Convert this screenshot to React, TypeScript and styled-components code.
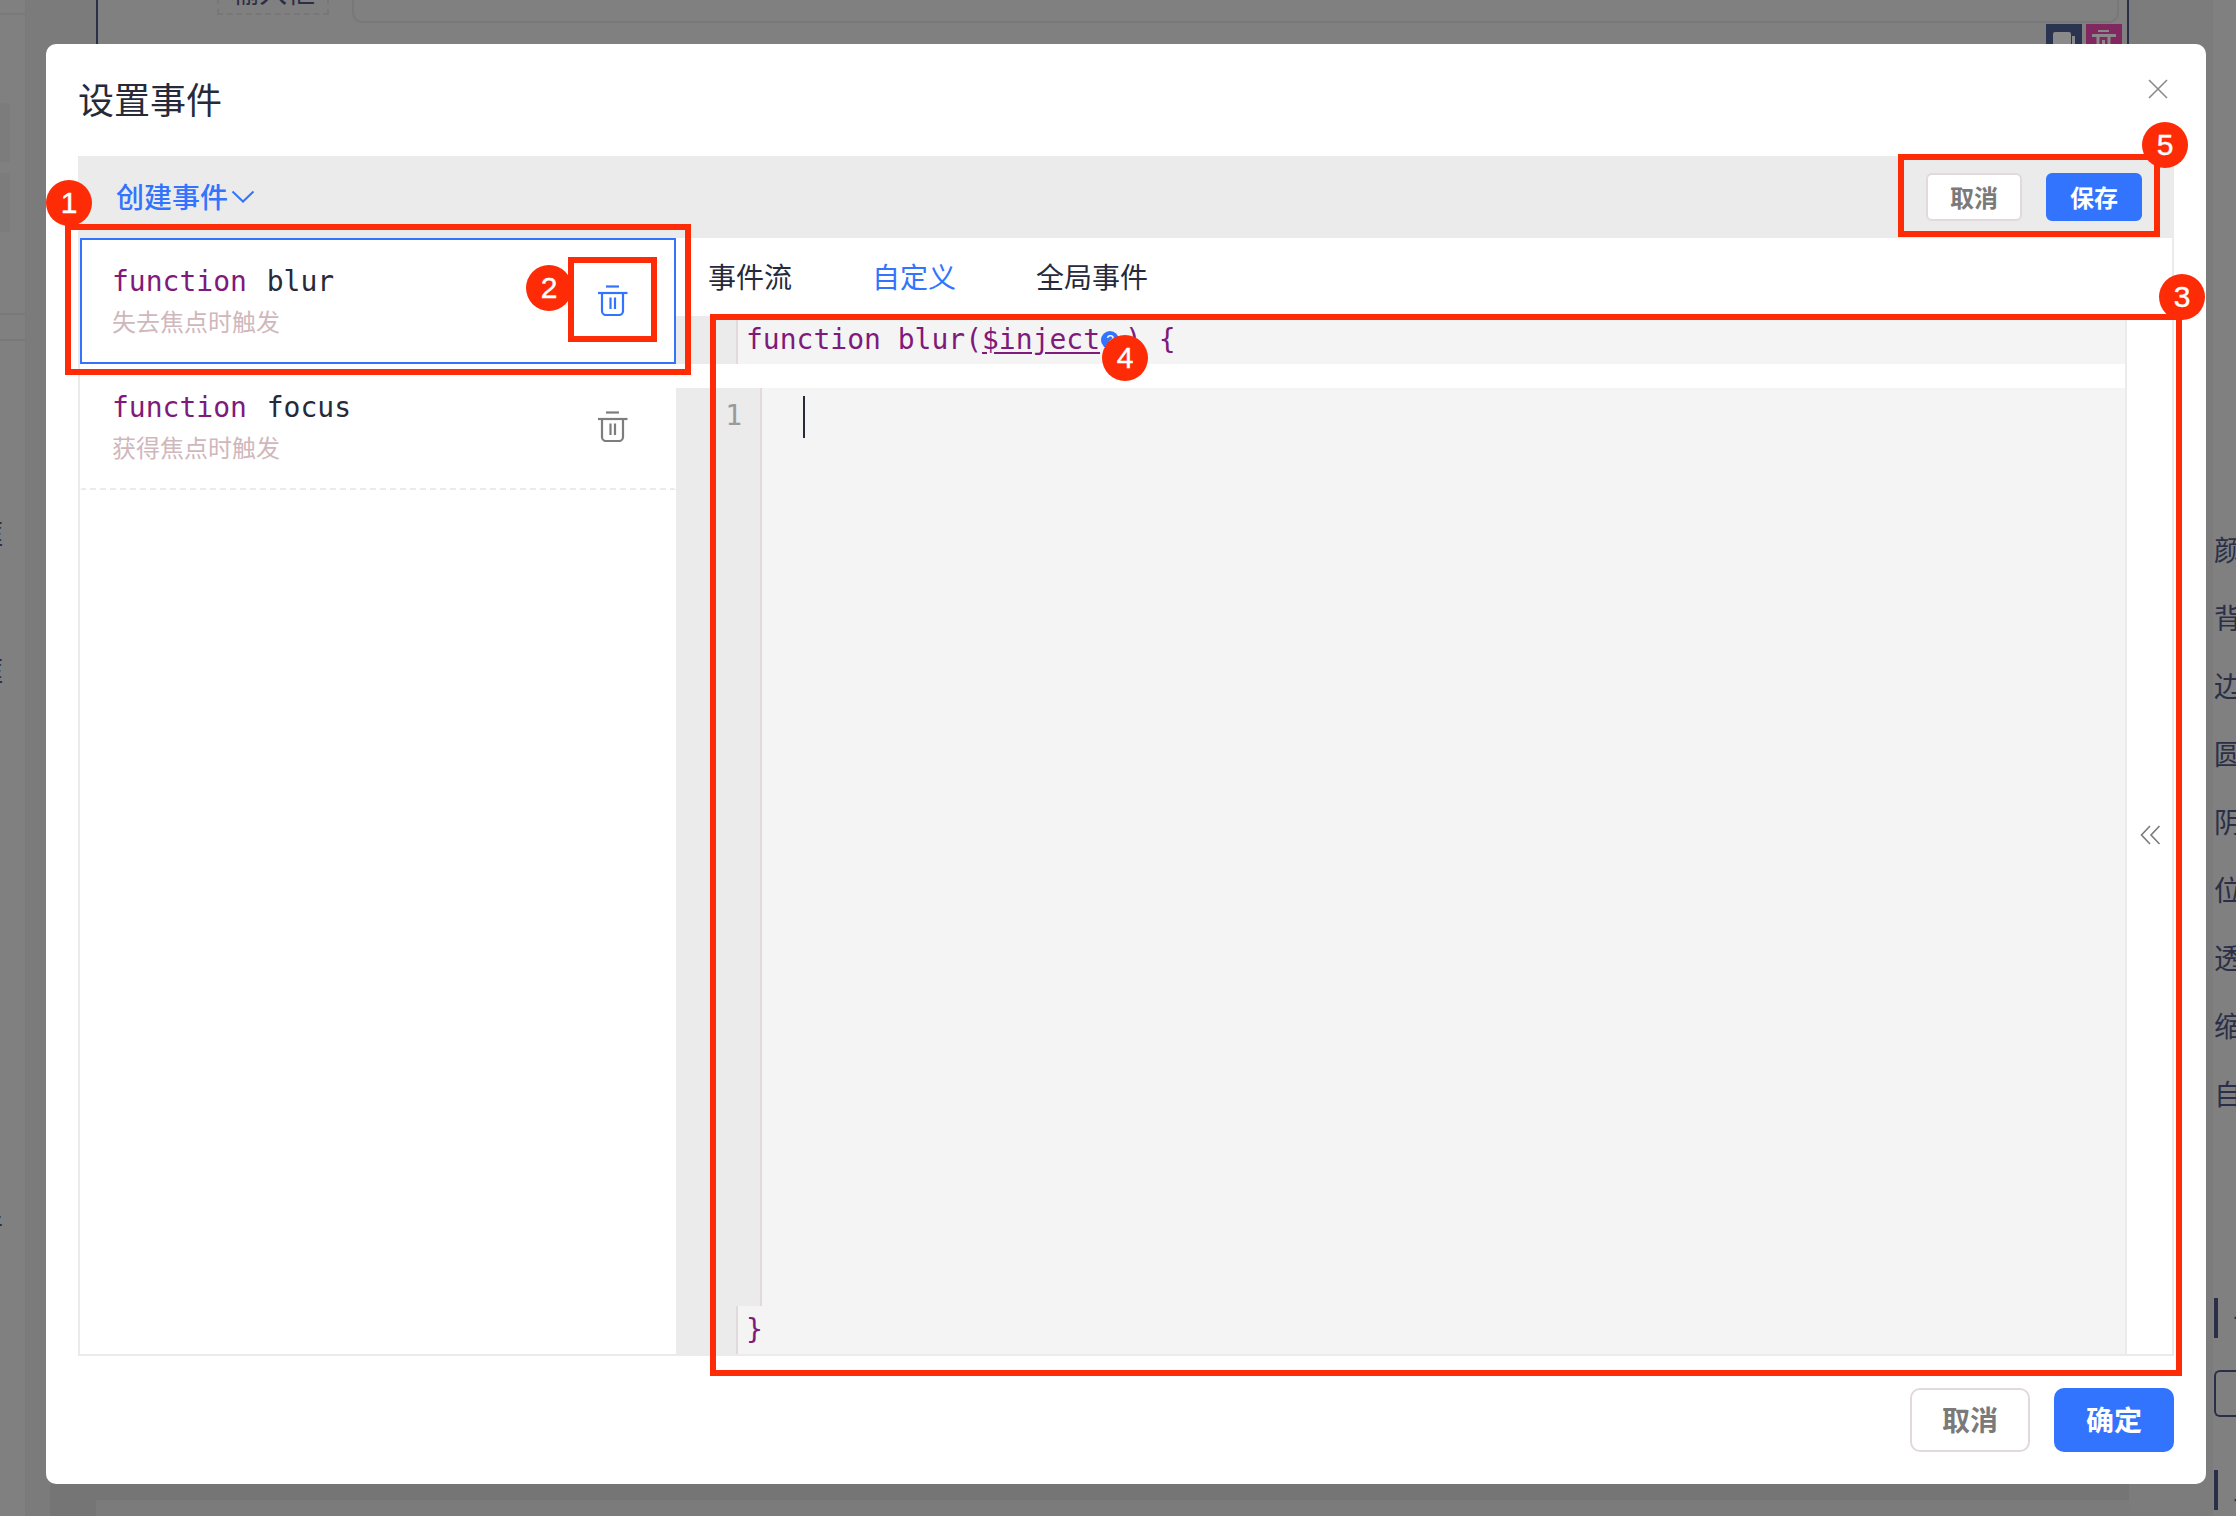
import React from "react";
import styled, { createGlobalStyle } from "styled-components";

const CJK = `"Noto Sans CJK SC", "Noto Sans", sans-serif`;
const MONO = `"DejaVu Sans Mono", "Noto Sans CJK SC", monospace`;
const INK = "#262a3a";
const NAVY = "#2a2f47";
const BLUE = "#3274fd";
const PURPLE = "#801a7a";
const RED = "#fd2b06";
const LINE = "#ebebeb";
const DIVIDER = "#e2d9dc";

const Global = createGlobalStyle`
  html, body { margin: 0; padding: 0; background: #7f7f7f; }
  * { box-sizing: border-box; }
`;

const Page = styled.div`
  position: relative;
  display: flex;
  width: 2236px;
  height: 1516px;
  overflow: hidden;
  background: #7f7f7f;
  font-family: ${CJK};
`;

/* ---------- dimmed page behind the dialog ---------- */
const LeftRail = styled.aside`
  display: flex;
  flex-direction: column;
  width: 26px;
  flex: none;
  overflow: hidden;
  background: #808080;
  border-right: 1px solid #797979;
`;
const RailBlock = styled.div`
  flex: none;
  height: 300px;
  margin-top: 13px;
  padding-top: 88px;
  border-top: 2px solid #7a7a7a;
`;
const RailPatch = styled.div`
  width: 10px;
  height: 59px;
  margin-bottom: 11px;
  background: #7c7c7c;
`;
const RailPanel = styled.div`
  height: 28px;
  flex: none;
  border-top: 2px solid #797979;
  border-bottom: 2px solid #797979;
`;
const LeftLabel = styled.span<{ $top: number }>`
  display: block;
  flex: none;
  margin: ${(p) => p.$top}px 0 0 -25px;
  width: 28px;
  font-size: 28px;
  line-height: 28px;
  color: ${NAVY};
`;
const Gutter = styled.div`
  display: flex;
  flex-direction: column;
  justify-content: flex-end;
  width: 70px;
  flex: none;
  background: #7b7b7b;
`;
const GutterFoot = styled.div`
  height: 32px;
  margin-left: 24px;
  background: #757575;
`;
const Stage = styled.main`
  display: flex;
  flex-direction: column;
  width: 2033px;
  flex: none;
`;
const Canvas = styled.div`
  flex: 1;
  border-left: 2px solid ${NAVY};
  border-right: 2px solid ${NAVY};
  background: #808080;
`;
const CanvasFoot = styled.div`
  height: 32px;
  padding-top: 16px;
  background: #757575;
`;
const CanvasFootInner = styled.div`
  height: 16px;
  background: #7b7b7b;
`;
const FieldRow = styled.div`
  display: flex;
  align-items: flex-end;
  margin-left: 119px;
  height: 23px;
  gap: 23px;
`;
const FieldLabel = styled.div`
  display: flex;
  align-items: flex-end;
  justify-content: center;
  width: 112px;
  height: 40px;
  margin-bottom: 8px;
  padding-bottom: 8px;
  border: 2px dashed #777;
  border-top: none;
  font-size: 28px;
  line-height: 28px;
  color: ${NAVY};
`;
const FieldInput = styled.div`
  width: 1767px;
  height: 40px;
  border: 2px solid #787878;
  border-top: none;
  border-radius: 0 0 10px 10px;
`;
const ActionRow = styled.div`
  display: flex;
  justify-content: flex-end;
  gap: 4px;
  margin-top: 1px;
  padding-right: 5px;
`;
const ActionSquare = styled.div<{ $bg: string }>`
  width: 36px;
  height: 36px;
  padding-top: 6px;
  display: flex;
  justify-content: center;
  align-items: flex-start;
  background: ${(p) => p.$bg};
`;
const RightGutter = styled.div`
  width: 84px;
  flex: none;
  background: #7c7c7c;
`;
const RightRail = styled.aside`
  display: flex;
  flex-direction: column;
  flex: 1;
  overflow: hidden;
  padding: 535px 0 0 1px;
  background: #808080;
  color: ${NAVY};
`;
const RightLabel = styled.div`
  flex: none;
  height: 68px;
  font-size: 28px;
  line-height: 28px;
  white-space: nowrap;
`;
const BarRow = styled.div<{ $top: number }>`
  display: flex;
  flex: none;
  gap: 15px;
  align-items: center;
  height: 40px;
  margin-top: ${(p) => p.$top}px;
  font-size: 28px;
  line-height: 40px;
  white-space: nowrap;
  &::before {
    content: "";
    width: 4px;
    height: 40px;
    flex: none;
    background: ${NAVY};
  }
`;
const RailBox = styled.div`
  flex: none;
  width: 40px;
  height: 47px;
  margin-top: 32px;
  border: 2px solid ${NAVY};
  border-right: none;
  border-radius: 6px 0 0 6px;
`;

/* ---------- dialog ---------- */
const Dialog = styled.section`
  position: absolute;
  left: 46px;
  top: 44px;
  display: flex;
  flex-direction: column;
  width: 2160px;
  height: 1440px;
  padding: 0 32px;
  border-radius: 10px;
  background: #fff;
  color: ${INK};
`;
const DialogHead = styled.header`
  display: flex;
  align-items: center;
  justify-content: space-between;
  height: 112px;
  flex: none;
`;
const DialogTitle = styled.h2`
  margin: 0 0 5px;
  font-size: 36px;
  line-height: 48px;
  font-weight: 400;
`;
const CloseIcon = styled.svg`
  width: 20px;
  height: 20px;
  margin: 0 6px 22px 0;
`;
const Toolbar = styled.div`
  display: flex;
  align-items: center;
  justify-content: space-between;
  flex: none;
  height: 82px;
  padding: 0 32px 0 38px;
  background: ${LINE};
`;
const CreateEvent = styled.div`
  display: flex;
  align-items: center;
  gap: 3px;
  padding-bottom: 2px;
  font-size: 28px;
  font-weight: 500;
  color: ${BLUE};
`;
const ToolActions = styled.div`
  display: flex;
  gap: 24px;
`;
const Button = styled.button<{ $primary?: boolean; $large?: boolean }>`
  width: ${(p) => (p.$large ? 120 : 96)}px;
  height: ${(p) => (p.$large ? 64 : 48)}px;
  padding: 0 0 2px;
  border: 2px solid ${(p) => (p.$primary ? BLUE : DIVIDER)};
  border-radius: ${(p) => (p.$large ? 10 : 6)}px;
  background: ${(p) => (p.$primary ? BLUE : "#fff")};
  color: ${(p) => (p.$primary ? "#fff" : "#7a7a7a")};
  font-family: ${CJK};
  font-size: ${(p) => (p.$large ? 28 : 24)}px;
  font-weight: 700;
`;
const Workspace = styled.div`
  display: flex;
  flex: none;
  height: 1118px;
  border: 2px solid ${LINE};
  border-top: none;
`;
const EventList = styled.div`
  width: 596px;
  flex: none;
`;
const EventRow = styled.div<{ $active?: boolean }>`
  display: flex;
  align-items: center;
  justify-content: space-between;
  height: 126px;
  padding: 0 46px 1px 30px;
  border: 2px solid ${(p) => (p.$active ? BLUE : "transparent")};
  border-bottom: 2px ${(p) => (p.$active ? "solid" : "dashed")}
    ${(p) => (p.$active ? BLUE : LINE)};
`;
const EventName = styled.div`
  font-family: ${MONO};
  font-size: 28px;
  line-height: 34px;
  word-spacing: 3px;
  white-space: pre;
  color: ${INK};
`;
const Keyword = styled.span`
  color: ${PURPLE};
`;
const EventHint = styled.div`
  margin-top: 6px;
  font-size: 24px;
  line-height: 32px;
  color: #d0b7bc;
`;
const TrashIcon = styled.svg<{ $active?: boolean }>`
  width: 30px;
  height: 31px;
  flex: none;
  margin-bottom: 1px;
  fill: none;
  stroke: ${(p) => (p.$active ? BLUE : "#7d7d7d")};
  stroke-width: 2.2;
`;
const EditorPane = styled.div`
  display: flex;
  flex-direction: column;
  flex: 1;
  min-width: 0;
`;
const Tabs = styled.nav`
  display: flex;
  flex: none;
  gap: 80px;
  height: 78px;
  padding: 18px 0 0 32px;
`;
const Tab = styled.span<{ $active?: boolean }>`
  font-size: 28px;
  line-height: 40px;
  color: ${(p) => (p.$active ? BLUE : INK)};
`;
const EditorRow = styled.div`
  display: flex;
  flex: 1;
  min-height: 0;
`;
const CodeColumn = styled.div`
  display: flex;
  flex-direction: column;
  flex: 1;
  min-width: 0;
  font-family: ${MONO};
  font-size: 28px;
`;
const FixedLine = styled.div`
  display: flex;
  flex: none;
  height: 48px;
  background: #f4f4f4;
`;
const FixedGutter = styled.div`
  width: 62px;
  flex: none;
  background: ${LINE};
  border-right: 2px solid ${DIVIDER};
`;
const FixedCode = styled.div`
  padding-left: 8px;
  line-height: 48px;
  white-space: pre;
  color: ${PURPLE};
`;
const Param = styled.span`
  text-decoration: underline;
  text-underline-offset: 3px;
`;
const Help = styled.span`
  display: inline-flex;
  align-items: center;
  justify-content: center;
  width: 18px;
  height: 18px;
  margin: 0 6px 0 1px;
  border-radius: 50%;
  background: ${BLUE};
  color: #fff;
  font-family: "Liberation Sans", sans-serif;
  font-size: 14px;
  line-height: 18px;
  vertical-align: 4px;
`;
const Spacer = styled.div`
  height: 24px;
  flex: none;
`;
const CodeBody = styled.div`
  display: flex;
  flex: 1;
  min-height: 0;
  background: #f4f4f4;
`;
const LineGutter = styled.div`
  width: 86px;
  flex: none;
  padding-right: 18px;
  background: ${LINE};
  border-right: 2px solid ${DIVIDER};
  text-align: right;
  line-height: 56px;
  color: #9a9a9a;
`;
const Caret = styled.div`
  width: 2px;
  height: 42px;
  margin: 8px 0 0 41px;
  background: ${INK};
`;
const Collapse = styled.div`
  display: flex;
  align-items: center;
  justify-content: center;
  width: 47px;
  flex: none;
  padding-left: 2px;
  border-left: 2px solid ${LINE};
`;
const CollapseIcon = styled.svg`
  width: 21px;
  height: 20px;
  fill: none;
  stroke: #7a7a7a;
  stroke-width: 1.6;
`;
const DialogFoot = styled.footer`
  display: flex;
  justify-content: flex-end;
  gap: 24px;
  padding-top: 32px;
`;

/* ---------- red annotations painted over the screenshot ---------- */
const Callout = styled.div<{ $x: number; $y: number; $w: number; $h: number }>`
  position: absolute;
  left: ${(p) => p.$x}px;
  top: ${(p) => p.$y}px;
  width: ${(p) => p.$w}px;
  height: ${(p) => p.$h}px;
  border: 6px solid ${RED};
`;
const Badge = styled.div<{ $cx: number; $cy: number }>`
  position: absolute;
  left: ${(p) => p.$cx - 23}px;
  top: ${(p) => p.$cy - 23}px;
  width: 46px;
  height: 46px;
  border-radius: 50%;
  background: ${RED};
  color: #fff;
  font-family: "Liberation Sans", Arial, sans-serif;
  font-size: 30px;
  line-height: 46px;
  text-align: center;
  -webkit-text-stroke: 0.4px #fff;
`;

const Trash = ({ active }: { active?: boolean }) => (
  <TrashIcon $active={active} viewBox="0 0 30 31">
    <path d="M8 1.5H21" />
    <path d="M0 8H29.5" />
    <path d="M4 8V26a4 4 0 0 0 4 4H21a4 4 0 0 0 4-4V8" />
    <path d="M12.5 12.5V24M17 12.5V24" />
  </TrashIcon>
);

const labels = ["颜色", "背景", "边框", "圆角", "阴影", "位置", "透明", "缩放", "自动"];
const callouts = [
  { x: 65, y: 224, w: 626, h: 151 },
  { x: 568, y: 257, w: 89, h: 85 },
  { x: 710, y: 314, w: 1472, h: 1062 },
  { x: 1898, y: 154, w: 262, h: 83 },
];
const badges = [
  { n: 1, cx: 69, cy: 203 },
  { n: 2, cx: 549, cy: 288 },
  { n: 3, cx: 2182, cy: 297 },
  { n: 4, cx: 1125, cy: 358 },
  { n: 5, cx: 2165, cy: 145 },
];

export default function App() {
  return (
    <Page>
      <Global />
      <LeftRail>
        <RailBlock>
          <RailPatch />
          <RailPatch />
        </RailBlock>
        <RailPanel />
        <LeftLabel $top={178}>框</LeftLabel>
        <LeftLabel $top={109}>框</LeftLabel>
        <LeftLabel $top={524}>件</LeftLabel>
      </LeftRail>
      <Gutter>
        <GutterFoot />
      </Gutter>
      <Stage>
        <Canvas>
          <FieldRow>
            <FieldLabel>输入框</FieldLabel>
            <FieldInput />
          </FieldRow>
          <ActionRow>
            <ActionSquare $bg="#2a3350">
              <svg width="24" height="24" viewBox="0 0 24 24">
                <rect x="1" y="2" width="18" height="22" rx="2" fill="#8a8a8a" />
                <rect x="20" y="6" width="3" height="18" fill="#8a8a8a" />
              </svg>
            </ActionSquare>
            <ActionSquare $bg="#80285f">
              <svg width="24" height="24" viewBox="0 0 24 24" fill="none" stroke="#8a8a8a">
                <path strokeWidth="2" d="M6 1H17" />
                <path strokeWidth="3" d="M0 5.5H24" />
                <path strokeWidth="3" d="M6 7V24M11.5 10V24M17 7V24" />
              </svg>
            </ActionSquare>
          </ActionRow>
        </Canvas>
        <CanvasFoot>
          <CanvasFootInner />
        </CanvasFoot>
      </Stage>
      <RightGutter />
      <RightRail>
        {labels.map((l) => (
          <RightLabel key={l}>{l}</RightLabel>
        ))}
        <BarRow $top={151}>十</BarRow>
        <RailBox />
        <BarRow $top={53}>二</BarRow>
      </RightRail>

      <Dialog>
        <DialogHead>
          <DialogTitle>设置事件</DialogTitle>
          <CloseIcon viewBox="0 0 20 20" fill="none" stroke="#8a8a8a" strokeWidth="1.6">
            <path d="M1 1L19 19M19 1L1 19" />
          </CloseIcon>
        </DialogHead>
        <Toolbar>
          <CreateEvent>
            创建事件
            <svg width="24" height="13" viewBox="0 0 24 13" fill="none" stroke={BLUE} strokeWidth="2">
              <path d="M1.5 1.5L12 11.5L22.5 1.5" />
            </svg>
          </CreateEvent>
          <ToolActions>
            <Button>取消</Button>
            <Button $primary>保存</Button>
          </ToolActions>
        </Toolbar>
        <Workspace>
          <EventList>
            <EventRow $active>
              <div>
                <EventName>
                  <Keyword>function</Keyword> blur
                </EventName>
                <EventHint>失去焦点时触发</EventHint>
              </div>
              <Trash active />
            </EventRow>
            <EventRow>
              <div>
                <EventName>
                  <Keyword>function</Keyword> focus
                </EventName>
                <EventHint>获得焦点时触发</EventHint>
              </div>
              <Trash />
            </EventRow>
          </EventList>
          <EditorPane>
            <Tabs>
              <Tab>事件流</Tab>
              <Tab $active>自定义</Tab>
              <Tab>全局事件</Tab>
            </Tabs>
            <EditorRow>
              <CodeColumn>
                <FixedLine>
                  <FixedGutter />
                  <FixedCode>
                    function blur(<Param>$inject</Param>
                    <Help>?</Help>) {"{"}
                  </FixedCode>
                </FixedLine>
                <Spacer />
                <CodeBody>
                  <LineGutter>1</LineGutter>
                  <Caret />
                </CodeBody>
                <FixedLine>
                  <FixedGutter />
                  <FixedCode>{"}"}</FixedCode>
                </FixedLine>
              </CodeColumn>
              <Collapse>
                <CollapseIcon viewBox="0 0 21 20">
                  <path d="M10 1L1.5 10L10 19M19.5 1L11 10L19.5 19" />
                </CollapseIcon>
              </Collapse>
            </EditorRow>
          </EditorPane>
        </Workspace>
        <DialogFoot>
          <Button $large>取消</Button>
          <Button $large $primary>
            确定
          </Button>
        </DialogFoot>
      </Dialog>

      {callouts.map((c) => (
        <Callout key={c.x} $x={c.x} $y={c.y} $w={c.w} $h={c.h} />
      ))}
      {badges.map((b) => (
        <Badge key={b.n} $cx={b.cx} $cy={b.cy}>
          {b.n}
        </Badge>
      ))}
    </Page>
  );
}
